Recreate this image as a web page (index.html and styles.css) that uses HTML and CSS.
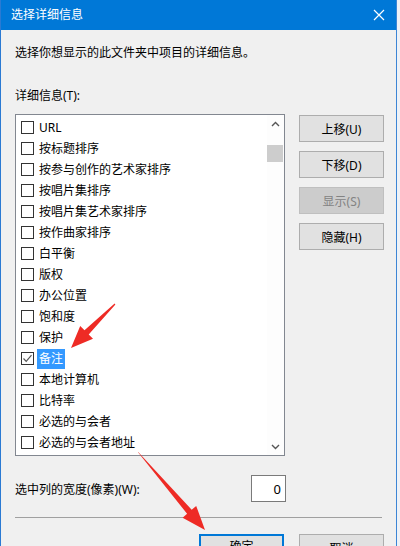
FILE: index.html
```html
<!DOCTYPE html>
<html lang="zh-CN">
<head>
  <meta charset="UTF-8" />
  <title>选择详细信息</title>
  <link rel="stylesheet" href="styles.css">
</head>
<body>
  <div class="window">
    <div class="titlebar">
      <span class="title">选择详细信息</span>
      <svg class="close" width="12" height="12" viewBox="0 0 12 12">
        <path d="M1 1 L11 11 M11 1 L1 11" stroke="#fff" stroke-width="1.2" fill="none" />
      </svg>
    </div>

    <div class="content">
      <p class="intro">选择你想显示的此文件夹中项目的详细信息。</p>
      <p class="field-label">详细信息(T):</p>

      <div class="main">
        <div class="listbox">
          <ul class="items">
            <li><span class="box"></span><span class="text">URL</span></li>
            <li><span class="box"></span><span class="text">按标题排序</span></li>
            <li><span class="box"></span><span class="text">按参与创作的艺术家排序</span></li>
            <li><span class="box"></span><span class="text">按唱片集排序</span></li>
            <li><span class="box"></span><span class="text">按唱片集艺术家排序</span></li>
            <li><span class="box"></span><span class="text">按作曲家排序</span></li>
            <li><span class="box"></span><span class="text">白平衡</span></li>
            <li><span class="box"></span><span class="text">版权</span></li>
            <li><span class="box"></span><span class="text">办公位置</span></li>
            <li><span class="box"></span><span class="text">饱和度</span></li>
            <li><span class="box"></span><span class="text">保护</span></li>
            <li class="selected">
              <span class="box">
                <svg width="11" height="11" viewBox="0 0 11 11">
                  <path d="M1.5 5.5 L4.2 8.3 L9.5 2.2" stroke="#555" stroke-width="1.2" fill="none" />
                </svg>
              </span>
              <span class="text">备注</span>
            </li>
            <li><span class="box"></span><span class="text">本地计算机</span></li>
            <li><span class="box"></span><span class="text">比特率</span></li>
            <li><span class="box"></span><span class="text">必选的与会者</span></li>
            <li><span class="box"></span><span class="text">必选的与会者地址</span></li>
          </ul>
          <div class="scrollbar">
            <div class="scroll-btn">
              <svg width="9" height="6" viewBox="0 0 9 6"><path d="M1 5 L4.5 1.5 L8 5" stroke="#555" stroke-width="1.4" fill="none" /></svg>
            </div>
            <div class="thumb"></div>
            <div class="track"></div>
            <div class="scroll-btn">
              <svg width="9" height="6" viewBox="0 0 9 6"><path d="M1 1 L4.5 4.5 L8 1" stroke="#555" stroke-width="1.4" fill="none" /></svg>
            </div>
          </div>
        </div>

        <div class="side-buttons">
          <button class="btn">上移(U)</button>
          <button class="btn">下移(D)</button>
          <button class="btn" disabled>显示(S)</button>
          <button class="btn">隐藏(H)</button>
        </div>
      </div>

      <div class="width-row">
        <span>选中列的宽度(像素)(W):</span>
        <div class="num-input">0</div>
      </div>

      <div class="separator"></div>

      <div class="footer">
        <button class="btn primary">确定</button>
        <button class="btn">取消</button>
      </div>
    </div>

    <svg class="arrows" width="400" height="546" viewBox="0 0 400 546">
      <polygon fill="#ee2b25" points="115.4,304.4 114.6,303.6 84.5,330.3 80.2,326 71,348 93,338.8 88.7,334.5" />
      <polygon fill="#ee2b25" points="137.6,451.7 138.4,452.3 191.7,509.8 196.2,505.9 205,530 182.6,517.7 187.1,513.8" />
    </svg>
  </div>
</body>
</html>
```

FILE: styles.css
```css
body {
  margin: 0;
  background: #eef2f7;
  font-family: "Noto Sans", "Noto Sans CJK SC", sans-serif;
  font-size: 12px;
  color: #000;
}
.window {
  position: relative;
  width: 395px;
  height: 546px;
  overflow: hidden;
  background: #f0f0f0;
  border-left: 1px solid #2a7ad3;
  border-right: 1px solid #3c85d5;
}
.titlebar {
  height: 30px;
  background: #0078d7;
  display: flex;
  align-items: center;
  justify-content: space-between;
  padding: 0 11px 0 10px;
}
.title {
  color: #fff;
  font-size: 12px;
  line-height: 16px;
}
.content {
  padding: 0 12px 0 14px;
}
.intro {
  margin: 15px 0 0;
  line-height: 16px;
}
.field-label {
  margin: 27px 0 0;
  line-height: 16px;
}
.main {
  display: flex;
  gap: 14px;
  margin-top: 10px;
}
.listbox {
  width: 270px;
  height: 342px;
  box-sizing: border-box;
  border: 1px solid #828790;
  background: #fff;
  display: flex;
}
.items {
  flex: 1;
  list-style: none;
  margin: 0;
  padding: 2px 0 0 5px;
}
.items li {
  height: 21px;
  display: flex;
  align-items: center;
}
.box {
  width: 13px;
  height: 13px;
  box-sizing: border-box;
  border: 1px solid #333;
  background: #fff;
  margin-right: 3px;
  display: flex;
  align-items: center;
  justify-content: center;
}
.text {
  padding: 0 2px;
  line-height: 20px;
}
.selected .text {
  background: #3399ff;
  color: #fff;
}
.scrollbar {
  width: 17px;
  display: flex;
  flex-direction: column;
  background: #fdfdfd;
}
.scroll-btn {
  height: 17px;
  display: flex;
  align-items: center;
  justify-content: center;
}
.thumb {
  height: 17px;
  margin: 13px 1px 0 0;
  background: #cdcdcd;
}
.track {
  flex: 1;
}
.side-buttons {
  display: flex;
  flex-direction: column;
  gap: 9px;
  margin-top: 1px;
}
.btn {
  width: 85px;
  height: 27px;
  box-sizing: border-box;
  background: #e1e1e1;
  border: 1px solid #adadad;
  font-family: inherit;
  font-size: 12px;
  color: #000;
  padding: 0;
}
.btn:disabled {
  background: #cccccc;
  border-color: #bfbfbf;
  color: #838383;
}
.width-row {
  width: 271px;
  display: flex;
  justify-content: space-between;
  align-items: center;
  margin-top: 19px;
}
.num-input {
  width: 35px;
  height: 27px;
  box-sizing: border-box;
  border: 1px solid #7a7a7a;
  background: #fff;
  text-align: right;
  padding: 4px 4px 0 0;
  font-size: 13px;
}
.separator {
  height: 1px;
  background: #a0a0a0;
  margin: 15px 2px 0 0;
}
.footer {
  display: flex;
  justify-content: flex-end;
  gap: 15px;
  margin-top: 16px;
}
.primary {
  height: 23px;
  border: 2px solid #0078d7;
}
.arrows {
  position: absolute;
  top: 0;
  left: -1px;
  pointer-events: none;
}
```
